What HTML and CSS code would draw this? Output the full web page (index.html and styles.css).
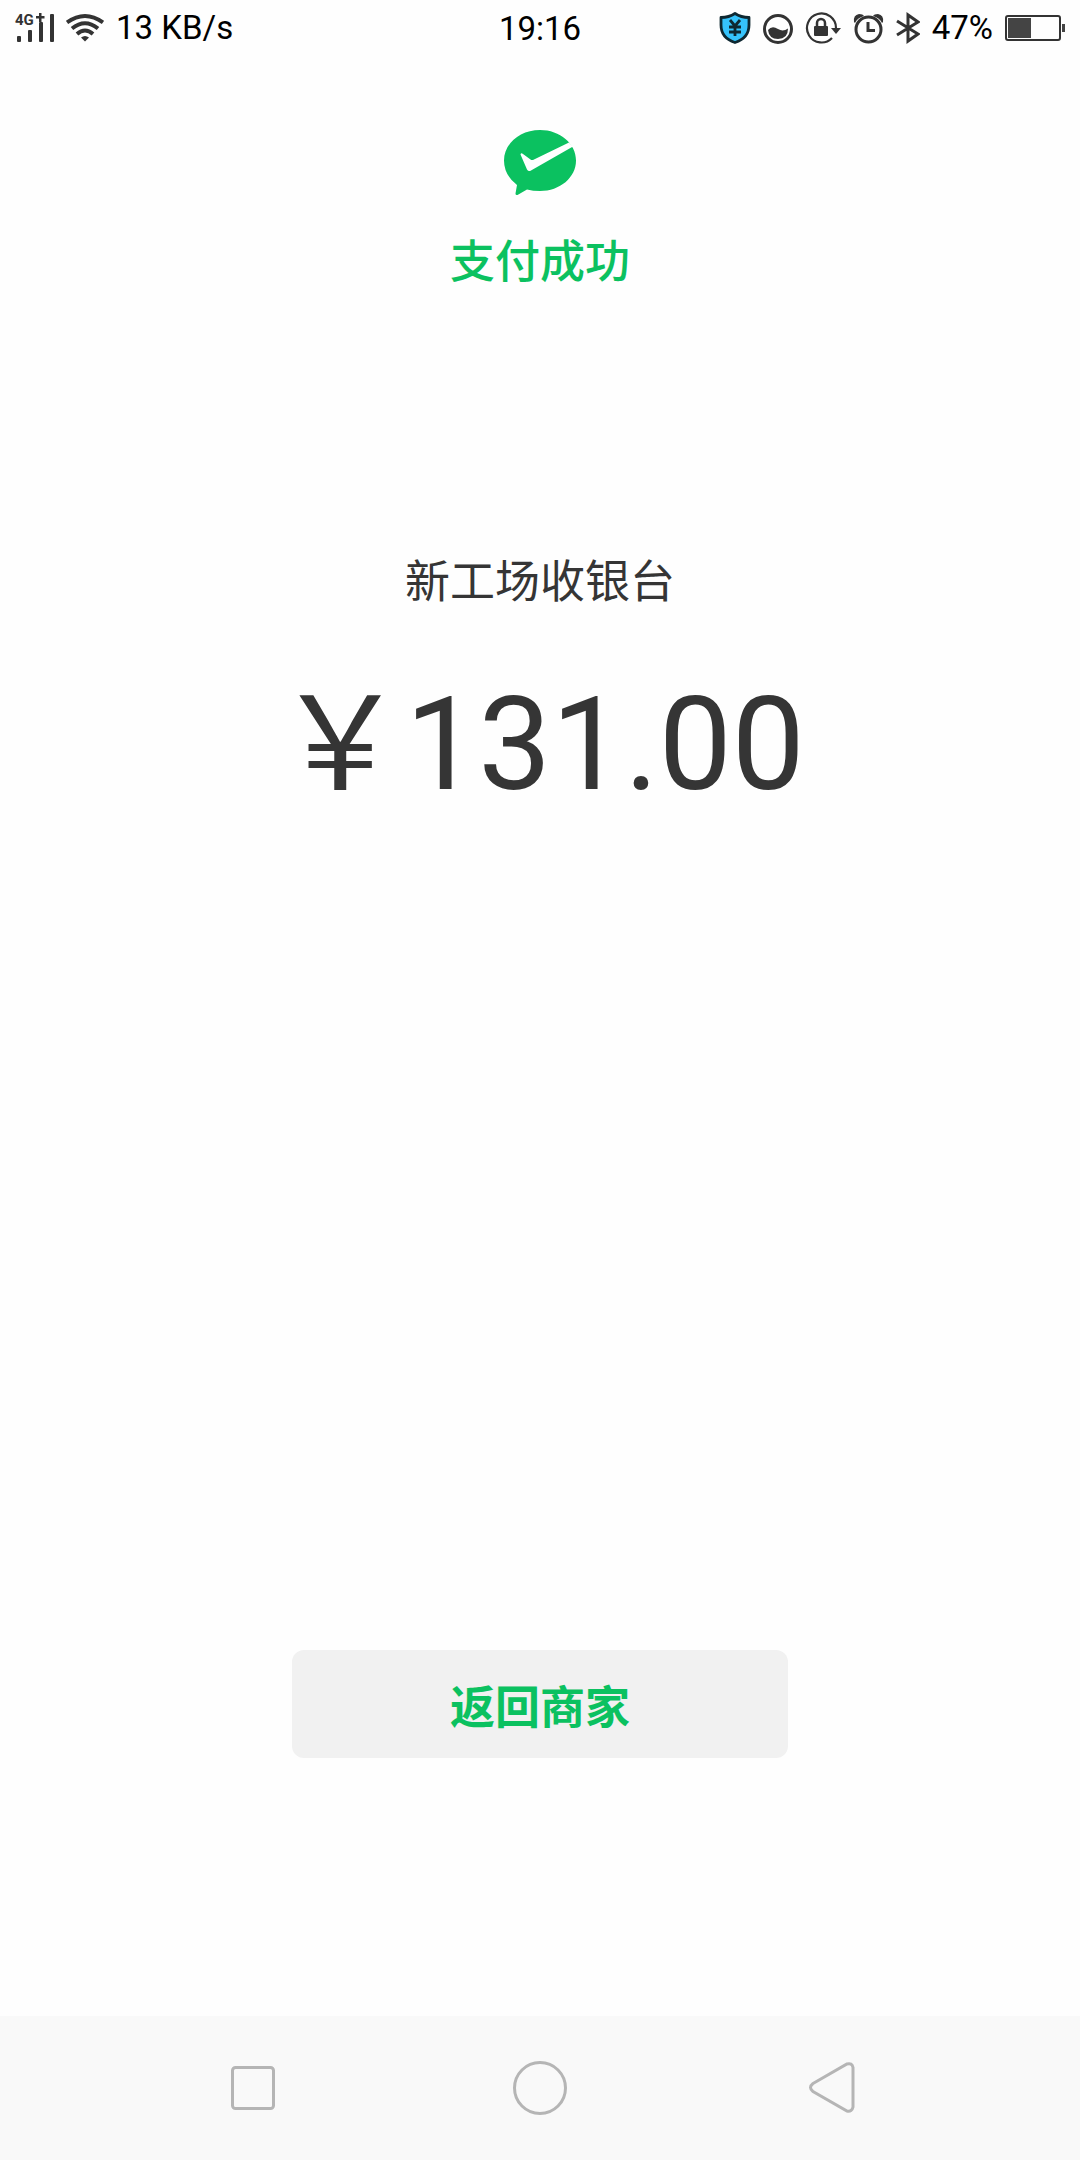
FILE: index.html
```html
<!DOCTYPE html>
<html lang="zh-CN">
<head>
<meta charset="utf-8">
<meta name="viewport" content="width=device-width, initial-scale=1">
<title>支付成功</title>
<link rel="stylesheet" href="styles.css">
</head>
<body>
<div class="app">
  <header class="status">
    <div class="status-side">
      <svg class="icon signal" width="39" height="32" viewBox="0 0 39 32" fill="#333" aria-hidden="true">
        <text class="network" x="0" y="13">4G</text>
        <path d="M24 1h2.500v3h3v2.500h-3v3.500H24V6.500h-3V4h3z"/>
        <rect x="2" y="24" width="4" height="6" rx="1"/>
        <rect x="13" y="18" width="4" height="12" rx="1"/>
        <rect x="24" y="10" width="4" height="20" rx="1"/>
        <rect x="35" y="2" width="4" height="28" rx="1"/>
      </svg>
      <svg class="icon" width="38" height="32" viewBox="0 0 38 32" fill="none" stroke="#333" stroke-width="4" aria-hidden="true">
        <path d="M1 10.500Q19-2.500 37 10.500M6 16.500Q19 6 32 16.500M11 22Q19 15 27 22"/>
        <path d="M15 25.500Q19 22.500 23 25.500L19 29.500z" fill="#333" stroke="none"/>
      </svg>
      <span>13 KB/s</span>
    </div>
    <time class="clock">19:16</time>
    <div class="status-side status-right">
      <svg class="icon" width="32" height="32" viewBox="0 0 32 32" aria-hidden="true">
        <path d="M16 1.500Q22 5.500 30 5.500V13Q30 26 16 30.500Q2 26 2 13V5.500Q10 5.500 16 1.500Z" fill="#35c3fb" stroke="#0e2831" stroke-width="2.800" stroke-linejoin="round"/>
        <path d="M11 8l5 6 5-6M10 15h12M10 20h12M16 14v10" fill="none" stroke="#0e2831" stroke-width="2.800"/>
      </svg>
      <svg class="icon" width="30" height="32" viewBox="0 0 30 32" aria-hidden="true">
        <circle cx="15" cy="17" r="13.500" fill="none" stroke="#333" stroke-width="3"/>
        <path d="M5 18Q9 13 15 17Q20 20 25 16.500Q25 27 15 27Q6 27 5 18Z" fill="#333"/>
      </svg>
      <svg class="icon" width="36" height="32" viewBox="0 0 36 32" aria-hidden="true">
        <path d="M27 26A14.500 14.500 0 1 1 31 16" fill="none" stroke="#333" stroke-width="2.200"/>
        <path d="M26 16h10l-5 6z" fill="#333"/>
        <rect x="9" y="14" width="14" height="10" rx="1" fill="#333"/>
        <path d="M12 15v-4a4 4 0 0 1 8 0v4" fill="none" stroke="#333" stroke-width="2.500"/>
      </svg>
      <svg class="icon" width="31" height="32" viewBox="0 0 31 32" fill="none" stroke="#333" stroke-width="3" aria-hidden="true">
        <circle cx="15.500" cy="17.500" r="12.500"/>
        <path d="M15 10v8.500h7"/>
        <path d="M1 10Q0 3 6 2Q10 2 11 4Q4 6 2 11ZM30 10Q31 3 25 2Q21 2 20 4Q27 6 29 11Z" fill="#333" stroke="none"/>
      </svg>
      <svg class="icon" width="24" height="32" viewBox="0 0 24 32" fill="none" stroke="#333" stroke-width="3" aria-hidden="true">
        <path d="M1 9l21 13-10 7V3l10 7L1 23"/>
      </svg>
      <span>47%</span>
      <svg class="icon" width="60" height="32" viewBox="0 0 60 32" aria-hidden="true">
        <rect x="1" y="4" width="54" height="24" rx="2" fill="none" stroke="#333" stroke-width="2"/>
        <path d="M3 6h23v20H3zM57 12h3v8h-3z" fill="#444"/>
      </svg>
    </div>
  </header>

  <main class="result">
    <svg class="logo" width="74" height="68" viewBox="0 0 74 68" aria-hidden="true">
      <path d="M37 1C57 1 73 14.500 73 31.500C73 48.500 57 62 37 62Q30 62 24 60.500L14.500 66Q12.500 66.500 12.500 64.500L14 56Q1 46 1 31.500C1 14.500 17 1 37 1Z" fill="#0bc160"/>
      <path d="M17.500 25.500Q18 23.500 20 25L27.500 30.500Q29 31.500 31 30.500L66 13.500L70 17.500L28 41.500Q25.500 43 24 40.500Z" fill="#fff"/>
    </svg>
    <h1 class="title">支付成功</h1>
    <p class="payee">新工场收银台</p>
    <p class="amount">￥131.00</p>
    <button class="back" type="button">返回商家</button>
  </main>

  <nav class="keys">
    <button class="key" type="button" aria-label="最近任务">
      <svg width="60" height="60" viewBox="0 0 60 60"><rect x="10.500" y="9.500" width="41" height="41" rx="3"/></svg>
    </button>
    <button class="key" type="button" aria-label="主屏幕">
      <svg width="60" height="60" viewBox="0 0 60 60"><circle cx="30" cy="30" r="25.500"/></svg>
    </button>
    <button class="key" type="button" aria-label="返回">
      <svg width="60" height="60" viewBox="0 0 60 60"><path d="M15 25.500L49 6Q54 4.500 55 9.500V49Q54 54 49 53L15 33.500Q10 29.500 15 25.500Z"/></svg>
    </button>
  </nav>
</div>
</body>
</html>
```
FILE: styles.css
```css
* {
  box-sizing: border-box;
}

body {
  margin: 0;
  background: #fefefe;
  color: #353535;
  font-family: Roboto, "Noto Sans CJK SC", sans-serif;
}

.app {
  display: flex;
  flex-direction: column;
  min-height: 100vh;
}

.status {
  display: grid;
  grid-template-columns: 1fr auto 1fr;
  align-items: center;
  height: 54px;
  padding: 0 15px;
  color: #000;
  font-size: 33px;
  line-height: 54px;
}

.clock {
  padding-top: 2px;
}

.status-side {
  display: flex;
  align-items: center;
  gap: 12px;
}

.status-right {
  justify-content: flex-end;
}

.icon {
  flex: none;
}

.signal {
  overflow: visible;
}

.network {
  font-size: 15px;
  font-weight: 700;
}

.result {
  flex: 1;
  display: flex;
  flex-direction: column;
  align-items: center;
  padding: 75px 24px 258px;
}

.logo {
  flex: none;
}

.title,
.payee,
.amount {
  margin: 0;
  font-weight: 400;
}

.title {
  margin-top: 36px;
  color: #0bc160;
  font-size: 45px;
  font-weight: 500;
  line-height: 60px;
}

.payee {
  margin-top: 260px;
  font-size: 45px;
  line-height: 60px;
}

.amount {
  margin-top: 57px;
  font-size: 130px;
  line-height: 150px;
}

.back {
  width: 48%;
  height: 108px;
  margin-top: auto;
  border: 0;
  border-radius: 12px;
  background: #f1f1f1;
  color: #0bc160;
  font: inherit;
  font-size: 45px;
  font-weight: 700;
}

.keys {
  display: grid;
  grid-template-columns: repeat(3, 1fr);
  height: 144px;
  padding: 0 10%;
  background: #f9f9f9;
}

.key {
  display: flex;
  align-items: center;
  justify-content: center;
  padding: 0;
  border: 0;
  background: none;
}

.key svg {
  fill: none;
  stroke: #b5b5b5;
  stroke-width: 3;
}
```
